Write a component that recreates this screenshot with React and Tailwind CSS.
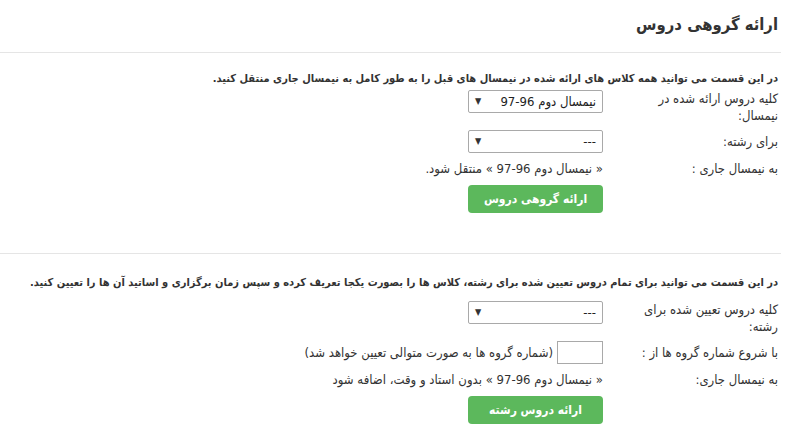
export default function App() {
  const Select = ({ value }) => (
    <div className="flex h-[23px] w-[135px] shrink-0 items-center justify-between rounded-[2px] border border-[#a9a9a9] bg-white px-[6px] text-[13px] text-[#222]">
      <span>{value}</span>
      <span className="text-[9px] text-[#333]">▼</span>
    </div>
  );

  const Label = ({ children }) => (
    <div className="w-[146px] shrink-0 text-[13px] leading-[17px] text-[#333]">{children}</div>
  );

  const Spacer = () => <div className="w-[29px] shrink-0" />;

  return (
    <div
      dir="rtl"
      className="min-h-[437px] w-[805px] bg-white font-['DejaVu_Sans_Condensed','DejaVu_Sans',sans-serif] text-[#333]"
    >
      <div className="mr-[24px]">
        <div className="border-b border-[#e5e5e5] pb-[14px] pr-[3px] pt-[12px]">
          <h2 className="text-[16.5px] font-bold leading-[26px] text-[#333]">ارائه گروهی دروس</h2>
        </div>

        <div className="border-b border-[#e5e5e5] pb-[40px] pr-[3px] pt-[17px]">
          <p className="text-[11px] font-bold leading-[18px]">
            در این قسمت می توانید همه کلاس های ارائه شده در نیمسال های قبل را به طور کامل به نیمسال جاری منتقل کنید.
          </p>
          <div className="mt-[2px] flex">
            <Label>کلیه دروس ارائه شده در نیمسال:</Label>
            <Spacer />
            <Select value="نیمسال دوم 96-97" />
          </div>
          <div className="mt-[6px] flex items-center">
            <Label>برای رشته:</Label>
            <Spacer />
            <Select value="---" />
          </div>
          <div className="mt-[7px] flex items-center">
            <Label>به نیمسال جاری :</Label>
            <Spacer />
            <div className="text-[13px] leading-[17px]">« نیمسال دوم 96-97 » منتقل شود.</div>
          </div>
          <div className="mt-[8px] flex">
            <div className="w-[175px] shrink-0" />
            <button className="h-[28px] w-[135px] rounded-[4px] bg-[#5cb85c] text-[12px] font-bold text-white">
              ارائه گروهی دروس
            </button>
          </div>
        </div>

        <div className="pr-[3px] pt-[20px]">
          <p className="text-[11px] font-bold leading-[18px]">
            در این قسمت می توانید برای تمام دروس تعیین شده برای رشته، کلاس ها را بصورت یکجا تعریف کرده و سپس زمان برگزاری و اساتید آن ها را تعیین کنید.
          </p>
          <div className="mt-[9px] flex">
            <Label>کلیه دروس تعیین شده برای رشته:</Label>
            <Spacer />
            <Select value="---" />
          </div>
          <div className="mt-[6px] flex items-center">
            <Label>با شروع شماره گروه ها از :</Label>
            <Spacer />
            <div className="flex items-center gap-[4px] text-[13px]">
              <div className="h-[23px] w-[46px] shrink-0 border border-[#a9a9a9] bg-white" />
              <span className="whitespace-nowrap">(شماره گروه ها به صورت متوالی تعیین خواهد شد)</span>
            </div>
          </div>
          <div className="mt-[7px] flex items-center">
            <Label>به نیمسال جاری:</Label>
            <Spacer />
            <div className="whitespace-nowrap text-[13px] leading-[17px]">« نیمسال دوم 96-97 » بدون استاد و وقت، اضافه شود</div>
          </div>
          <div className="mt-[8px] flex">
            <div className="w-[175px] shrink-0" />
            <button className="h-[28px] w-[135px] rounded-[4px] bg-[#5cb85c] text-[12px] font-bold text-white">
              ارائه دروس رشته
            </button>
          </div>
        </div>
      </div>
    </div>
  );
}
